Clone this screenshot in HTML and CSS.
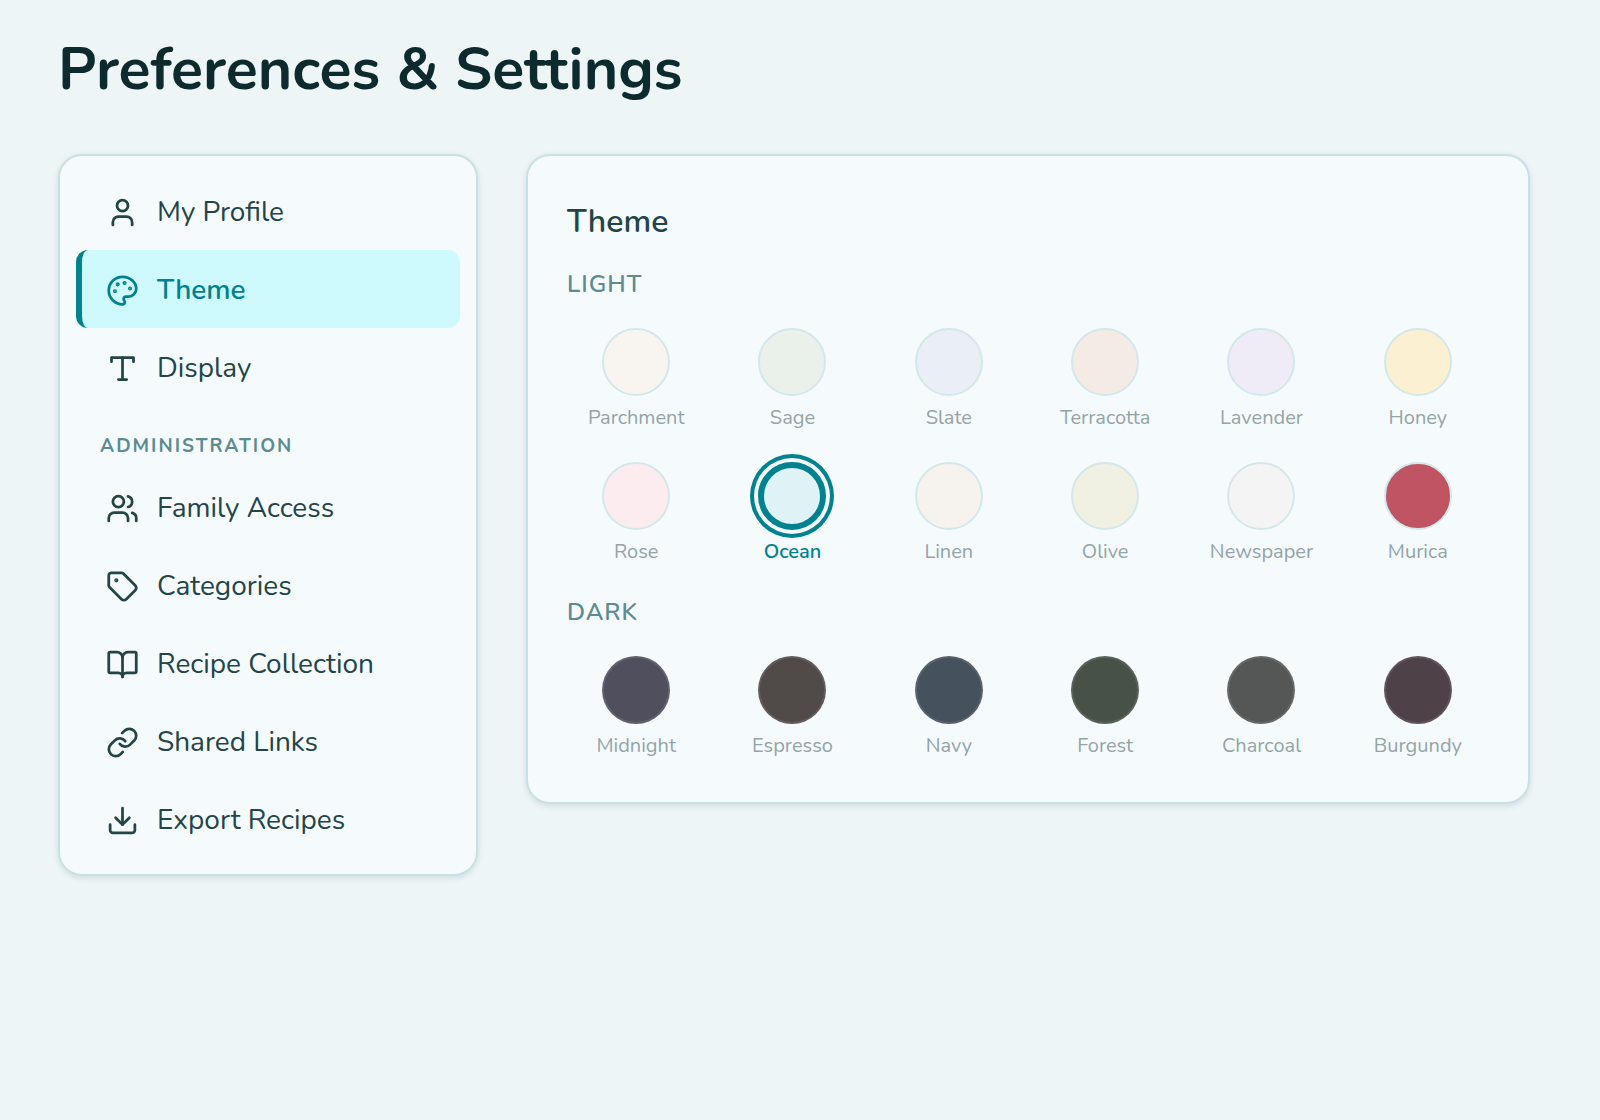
FILE: index.html
```html
<!DOCTYPE html>
<html lang="en">
<head>
    <meta charset="UTF-8">
    <meta name="viewport" content="width=device-width, initial-scale=1.0">
    <title>Preferences &amp; Settings</title>
    <link rel="stylesheet" href="styles.css">
</head>
<body>
    <main class="page">
        <h1 class="page-title">Preferences &amp; Settings</h1>

        <div class="settings-layout">
            <nav class="card settings-nav" aria-label="Settings">
                <button type="button" class="nav-item">
                    <svg class="nav-icon" viewBox="0 0 24 24"><circle cx="12" cy="7" r="4"/><path d="M19 21v-2a4 4 0 0 0-4-4H9a4 4 0 0 0-4 4v2"/></svg>
                    <span>My Profile</span>
                </button>
                <button type="button" class="nav-item active" aria-current="page">
                    <svg class="nav-icon" viewBox="0 0 24 24"><circle class="fill" cx="13.5" cy="6.5" r=".5"/><circle class="fill" cx="17.5" cy="10.5" r=".5"/><circle class="fill" cx="8.5" cy="7.5" r=".5"/><circle class="fill" cx="6.5" cy="12.5" r=".5"/><path d="M12 2C6.5 2 2 6.5 2 12s4.5 10 10 10c.926 0 1.648-.746 1.648-1.688 0-.437-.18-.835-.437-1.125-.29-.289-.438-.652-.438-1.125a1.64 1.64 0 0 1 1.668-1.668h1.996c3.051 0 5.555-2.503 5.555-5.554C21.965 6.012 17.461 2 12 2z"/></svg>
                    <span>Theme</span>
                </button>
                <button type="button" class="nav-item">
                    <svg class="nav-icon" viewBox="0 0 24 24"><path d="M4 7V4h16v3"/><path d="M9 20h6"/><path d="M12 4v16"/></svg>
                    <span>Display</span>
                </button>

                <h2 class="nav-heading">Administration</h2>

                <button type="button" class="nav-item">
                    <svg class="nav-icon" viewBox="0 0 24 24"><path d="M16 21v-2a4 4 0 0 0-4-4H6a4 4 0 0 0-4 4v2"/><circle cx="9" cy="7" r="4"/><path d="M22 21v-2a4 4 0 0 0-3-3.87"/><path d="M16 3.13a4 4 0 0 1 0 7.75"/></svg>
                    <span>Family Access</span>
                </button>
                <button type="button" class="nav-item">
                    <svg class="nav-icon" viewBox="0 0 24 24"><path d="M12.586 2.586A2 2 0 0 0 11.172 2H4a2 2 0 0 0-2 2v7.172a2 2 0 0 0 .586 1.414l8.704 8.704a2.426 2.426 0 0 0 3.42 0l6.58-6.58a2.426 2.426 0 0 0 0-3.42z"/><circle class="fill" cx="7.5" cy="7.5" r=".5"/></svg>
                    <span>Categories</span>
                </button>
                <button type="button" class="nav-item">
                    <svg class="nav-icon" viewBox="0 0 24 24"><path d="M12 7v14"/><path d="M3 18a1 1 0 0 1-1-1V4a1 1 0 0 1 1-1h5a4 4 0 0 1 4 4 4 4 0 0 1 4-4h5a1 1 0 0 1 1 1v13a1 1 0 0 1-1 1h-6a3 3 0 0 0-3 3 3 3 0 0 0-3-3z"/></svg>
                    <span>Recipe Collection</span>
                </button>
                <button type="button" class="nav-item">
                    <svg class="nav-icon" viewBox="0 0 24 24"><path d="M10 13a5 5 0 0 0 7.54.54l3-3a5 5 0 0 0-7.07-7.07l-1.72 1.71"/><path d="M14 11a5 5 0 0 0-7.54-.54l-3 3a5 5 0 0 0 7.07 7.07l1.71-1.71"/></svg>
                    <span>Shared Links</span>
                </button>
                <button type="button" class="nav-item">
                    <svg class="nav-icon" viewBox="0 0 24 24"><path d="M21 15v4a2 2 0 0 1-2 2H5a2 2 0 0 1-2-2v-4"/><path d="M7 10l5 5 5-5"/><path d="M12 15V3"/></svg>
                    <span>Export Recipes</span>
                </button>
            </nav>

            <section class="card theme-panel" aria-labelledby="themeTitle">
                <h2 class="panel-title" id="themeTitle">Theme</h2>

                <h3 class="group-title">Light</h3>
                <div class="swatch-grid">
                    <button type="button" class="swatch"><span class="dot parchment"></span>Parchment</button>
                    <button type="button" class="swatch"><span class="dot sage"></span>Sage</button>
                    <button type="button" class="swatch"><span class="dot slate"></span>Slate</button>
                    <button type="button" class="swatch"><span class="dot terracotta"></span>Terracotta</button>
                    <button type="button" class="swatch"><span class="dot lavender"></span>Lavender</button>
                    <button type="button" class="swatch"><span class="dot honey"></span>Honey</button>
                    <button type="button" class="swatch"><span class="dot rose"></span>Rose</button>
                    <button type="button" class="swatch selected" aria-pressed="true"><span class="dot ocean"></span>Ocean</button>
                    <button type="button" class="swatch"><span class="dot linen"></span>Linen</button>
                    <button type="button" class="swatch"><span class="dot olive"></span>Olive</button>
                    <button type="button" class="swatch"><span class="dot newspaper"></span>Newspaper</button>
                    <button type="button" class="swatch"><span class="dot murica"></span>Murica</button>
                </div>

                <h3 class="group-title">Dark</h3>
                <div class="swatch-grid">
                    <button type="button" class="swatch"><span class="dot dark midnight"></span>Midnight</button>
                    <button type="button" class="swatch"><span class="dot dark espresso"></span>Espresso</button>
                    <button type="button" class="swatch"><span class="dot dark navy"></span>Navy</button>
                    <button type="button" class="swatch"><span class="dot dark forest"></span>Forest</button>
                    <button type="button" class="swatch"><span class="dot dark charcoal"></span>Charcoal</button>
                    <button type="button" class="swatch"><span class="dot dark burgundy"></span>Burgundy</button>
                </div>
            </section>
        </div>
    </main>
</body>
</html>
```
FILE: styles.css
```css
:root {
    --bg: #edf5f7;
    --card: #f5fafd;
    --border: #c8e1e4;
    --accent: #00838f;
    --accent-soft: #cefafe;
    --text-strong: #0d2b2e;
    --text: #234548;
    --text-muted: #5c8c91;
    --text-faint: #93a5a7;
}

* {
    margin: 0;
    padding: 0;
    box-sizing: border-box;
}

body {
    font-family: 'Nunito', 'Lato', sans-serif;
    background-color: var(--bg);
    color: var(--text);
    min-height: 100vh;
}

button {
    font-family: inherit;
    background: none;
    border: none;
    cursor: pointer;
}

.page {
    padding: 34px 70px 48px 58px;
}

.page-title {
    font-size: 59px;
    font-weight: 700;
    line-height: 72px;
    color: var(--text-strong);
    margin-bottom: 48px;
}

.settings-layout {
    display: grid;
    grid-template-columns: 420px 1fr;
    gap: 48px;
    align-items: start;
}

.card {
    background-color: var(--card);
    border: 2px solid var(--border);
    border-radius: 24px;
    box-shadow: 0 2px 6px rgba(0, 60, 70, 0.12);
}

/* Sidebar */
.settings-nav {
    display: flex;
    flex-direction: column;
    padding: 16px;
}

.nav-item {
    display: flex;
    align-items: center;
    gap: 18px;
    height: 78px;
    padding: 2px 24px 0;
    border-left: 6px solid transparent;
    border-radius: 12px;
    font-size: 28px;
    color: var(--text);
    text-align: left;
}

.nav-item:hover {
    background-color: var(--bg);
}

.nav-item.active {
    background-color: var(--accent-soft);
    border-left-color: var(--accent);
    color: var(--accent);
    font-weight: 600;
}

.nav-icon {
    width: 33px;
    height: 33px;
    flex-shrink: 0;
    fill: none;
    stroke: currentColor;
    stroke-width: 2;
    stroke-linecap: round;
    stroke-linejoin: round;
}

.nav-icon .fill {
    fill: currentColor;
}

.nav-heading {
    padding: 26px 24px 8px;
    font-size: 19px;
    font-weight: 700;
    line-height: 28px;
    letter-spacing: 2px;
    text-transform: uppercase;
    color: var(--text-muted);
}

/* Theme picker */
.theme-panel {
    padding: 42px 41px 36px 39px;
}

.panel-title {
    font-size: 32px;
    font-weight: 600;
    line-height: 48px;
    color: var(--text);
    margin-bottom: 18px;
}

.group-title {
    font-size: 24px;
    font-weight: 600;
    line-height: 40px;
    letter-spacing: 1px;
    text-transform: uppercase;
    color: var(--text-muted);
    margin-bottom: 16px;
}

.swatch-grid {
    display: grid;
    grid-template-columns: repeat(6, 1fr);
    gap: 16px 18px;
}

.swatch-grid + .group-title {
    margin-top: 20px;
}

.swatch {
    display: flex;
    flex-direction: column;
    align-items: center;
    gap: 9px;
    padding: 8px 8px 7px;
    font-size: 20px;
    line-height: 26px;
    color: var(--text-faint);
}

.swatch.selected {
    color: var(--accent);
    font-weight: 600;
}

.dot {
    width: 68px;
    height: 68px;
    border: 2px solid #d3e8ea;
    border-radius: 50%;
}

.dot.dark {
    border-color: rgba(255, 255, 255, 0.1);
}

.selected .dot {
    border: 6px solid var(--accent);
    box-shadow: 0 0 0 4px var(--card), 0 0 0 8px var(--accent);
}

.parchment { background-color: #f8f5f1; }
.sage { background-color: #eaf1eb; }
.slate { background-color: #e9eef7; }
.terracotta { background-color: #f5ebe5; }
.lavender { background-color: #f0ecf7; }
.honey { background-color: #fcf0d3; }
.rose { background-color: #fcecef; }
.ocean { background-color: #dff2f5; }
.linen { background-color: #f6f2ed; }
.olive { background-color: #f0f0e3; }
.newspaper { background-color: #f4f4f4; }
.murica { background-color: #c05463; }
.midnight { background-color: #504f5e; }
.espresso { background-color: #504a49; }
.navy { background-color: #46515e; }
.forest { background-color: #465148; }
.charcoal { background-color: #555756; }
.burgundy { background-color: #4f4148; }

@media (max-width: 1100px) {
    .page {
        padding: 24px;
    }

    .settings-layout {
        grid-template-columns: 1fr;
        gap: 24px;
    }

    .swatch-grid {
        grid-template-columns: repeat(3, 1fr);
    }
}
```
